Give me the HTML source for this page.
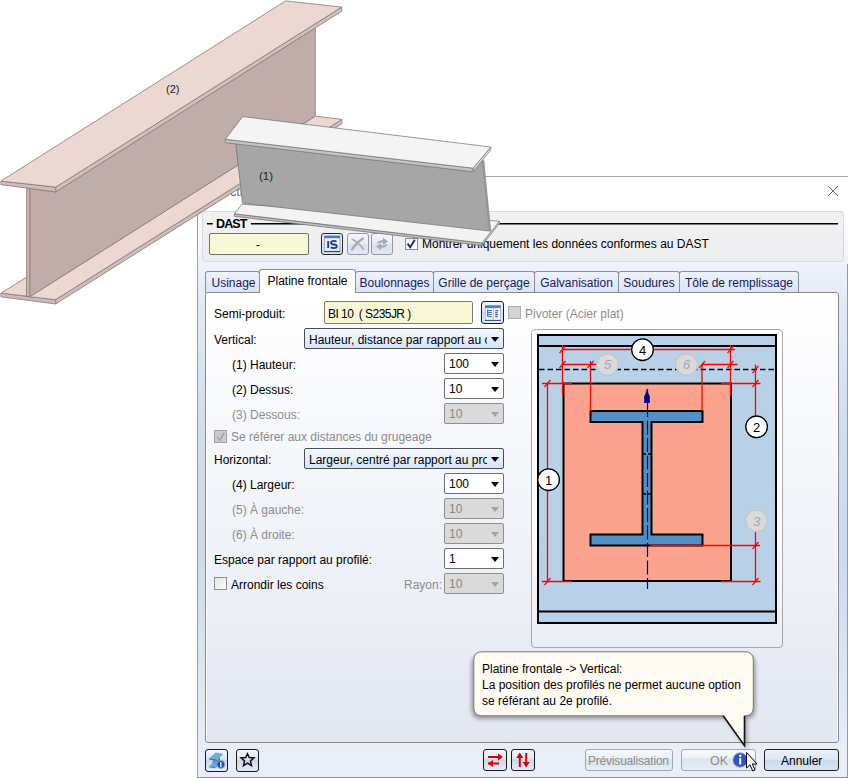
<!DOCTYPE html>
<html><head><meta charset="utf-8">
<style>
*{box-sizing:border-box;margin:0;padding:0}
html,body{width:848px;height:778px;overflow:hidden;background:#fff}
body{position:relative;font-family:"Liberation Sans",sans-serif;font-size:12px;color:#000}
.a{position:absolute}
.t{position:absolute;white-space:nowrap;line-height:14px}
.dlg{left:197px;top:176px;width:651px;height:602px;border-top:1px solid #a3a3a3;border-left:1px solid #9c9c9c;border-bottom:1px solid #8c8c8c;
 background:linear-gradient(#fff 0,#fff 36px,#eef2fb 86px,#e3e9f5 124px,#cfdff2 244px,#cbdaee 374px,#e0e8f5 524px,#e9eef8 574px)}
.grp{left:202px;top:211px;width:642px;height:51px;border:1px solid #d9dadc;border-radius:3px;background:linear-gradient(#f1f1f2,#ecedf0)}
.tab{top:271px;height:22px;border:1px solid #8e8f90;border-bottom:none;border-radius:3px 3px 0 0;background:linear-gradient(#eef2fb,#d9e3f6);color:#1b1b5a;text-align:center;line-height:22px}
.tab.act{top:269px;height:24px;background:#fff;color:#000;z-index:2;line-height:22px}
.panel{left:205px;top:292px;width:634px;height:451px;border:1px solid #8a8a8a;border-radius:3px;background:linear-gradient(#fff 0,#fcfcfe 60px,#f6f8fb 140px,#eef1f7 280px,#e5e9f2 400px,#e2e7f0 450px);box-shadow:inset 1px 1px 0 #fff,inset -1px 0 0 #fff}
.cmb{height:21px;border:1px solid #707070;border-radius:2px;background:#fff;line-height:19px;padding:1px 0 0 4px;overflow:hidden;white-space:nowrap}
.cmb:after{content:"";position:absolute;right:4px;top:8px;border-left:4px solid transparent;border-right:4px solid transparent;border-top:5px solid #000}
.cmb.dis{border-color:#8f8f8f;background:#dadada;color:#878787}
.cmb.dis:after{border-top-color:#a3a3a3;top:7.5px}
.cmb.blue{background:linear-gradient(#f5f9fe,#e8f0fb 50%,#d3e3f7);border-color:#4a4d52;padding-top:2px}
.gray{color:#8d8d8d}
.btn{height:22px;border:1px solid #8f99a6;border-radius:3px;background:linear-gradient(#f4f7fb 0,#e9eef5 45%,#d9e1ec 55%,#e3e9f1 100%)}
.chk{width:13px;height:13px;border:1px solid #8f8f8f;background:linear-gradient(135deg,#e4e4e4,#fafafa)}
</style></head><body>

<!-- dialog -->
<div class="a dlg"></div>
<div class="t" style="left:230px;top:185px;color:#5d6288;font-size:12.5px">cti</div>
<svg class="a" style="left:827px;top:185px" width="12" height="12"><path d="M1 1L11 11M11 1L1 11" stroke="#5a5a5a" stroke-width="0.9"/></svg>

<div class="a" style="left:847px;top:264px;width:1px;height:514px;background:#9a9a9a"></div>
<div class="a grp"></div>
<svg class="a" style="left:200px;top:220px" width="640" height="8"><path d="M7 3.7H12.8M51 3.7H638" stroke="#000" stroke-width="1.5"/></svg>
<div class="t" style="left:216px;top:217px;font-weight:bold;font-size:12.5px;letter-spacing:-0.9px">DAST</div>
<div class="a" style="left:209px;top:233px;width:100px;height:22px;border:1px solid #707070;border-radius:2px;background:#f9f8d5"></div>
<div class="t" style="left:256px;top:238px">-</div>

<!-- tabs -->
<div class="a tab" style="left:205px;width:55px;padding-left:2px">Usinage</div>
<div class="a tab act" style="left:259px;width:97px">Platine frontale</div>
<div class="a tab" style="left:355px;width:79px">Boulonnages</div>
<div class="a tab" style="left:433px;width:102px">Grille de perçage</div>
<div class="a tab" style="left:534px;width:85px">Galvanisation</div>
<div class="a tab" style="left:618px;width:62px">Soudures</div>
<div class="a tab" style="left:679px;width:120px">Tôle de remplissage</div>
<div class="a panel"></div>
<div class="a" style="left:260px;top:291px;width:95px;height:3px;background:#fff;z-index:3"></div>


<!-- DAST buttons -->
<div class="a" style="left:321px;top:233px;width:22px;height:22px;border:1px solid #262626;border-radius:3px;background:linear-gradient(#f0f5fb,#d6e2f0)"></div>
<svg class="a" style="left:323px;top:235px" width="18" height="18" viewBox="0 0 18 18">
<defs><linearGradient id="isg" x1="0" y1="0" x2="0" y2="1"><stop offset="0" stop-color="#fafcff"/><stop offset="1" stop-color="#dde6f3"/></linearGradient></defs>
<rect x="1.2" y="1" width="15.8" height="15.8" fill="url(#isg)" stroke="#7d8fb0" stroke-width="0.8"/>
<rect x="1.2" y="0.8" width="15.8" height="2.4" fill="#4a78d0"/>
<rect x="1.2" y="16" width="15.8" height="1" fill="#2a4680"/>
<path d="M5.2 6v7" stroke="#1c3d9e" stroke-width="1.9"/>
<path d="M13.6 6.6 Q12.8 5.9 11 5.9 Q8 5.9 8 7.7 Q8 9.2 10.8 9.5 Q13.8 9.8 13.8 11.3 Q13.8 13.1 10.8 13.1 Q8.8 13.1 7.8 12.3" fill="none" stroke="#1c3d9e" stroke-width="1.8"/>
</svg>
<div class="a btn" style="left:347px;top:233px;width:22px"></div>
<svg class="a" style="left:349px;top:235px" width="18" height="18" viewBox="0 0 18 18"><path d="M3 14.5 Q7 8 14 3.5" stroke="#a9adb3" stroke-width="2.3" fill="none" stroke-linecap="round"/><path d="M3.5 4.5 Q9 7 14.5 14" stroke="#a9adb3" stroke-width="1.8" fill="none" stroke-linecap="round"/></svg>
<div class="a btn" style="left:371px;top:233px;width:22px"></div>
<svg class="a" style="left:373px;top:235px" width="18" height="18" viewBox="0 0 18 18"><path d="M3.5 9 Q4.5 5 10 5.2 L10 2.5 L15 6.5 L10 10 L10 7.6 Q6.5 7.5 3.5 9Z" fill="#a7abb1"/><path d="M14.5 9 Q13.5 13 8 12.8 L8 15.5 L3 11.5 L8 8 L8 10.4 Q11.5 10.5 14.5 9Z" fill="#a7abb1"/></svg>
<div class="a chk" style="left:405px;top:238px;height:12px;background:linear-gradient(135deg,#ededed,#fff);border-color:#8e8f8f"></div>
<svg class="a" style="left:405px;top:238px" width="13" height="13"><path d="M2.6 5.6L5.2 9.2L9.8 1.8" stroke="#1e2a80" stroke-width="1.9" fill="none"/></svg>
<div class="t" style="left:422px;top:237px">Montrer uniquement les données conformes au DAST</div>

<!-- form -->
<div class="t" style="left:214px;top:307px">Semi-produit:</div>
<div class="a" style="left:324px;top:301px;width:149px;height:23px;border:1px solid #7c7c7c;border-radius:2px;background:#f9f8d6"></div>
<div class="t" style="left:328px;top:307px;letter-spacing:-0.55px">BI 10&nbsp; ( S235JR )</div>
<div class="a" style="left:481px;top:301px;width:23px;height:23px;border:1.5px solid #1a1a1a;border-radius:3px;background:linear-gradient(#f2f7fc 0,#dfe9f5 40%,#c8d8eb 50%,#e3ecf6 100%)"></div>
<svg class="a" style="left:484px;top:304px" width="18" height="18" viewBox="0 0 18 18">
<rect x="1" y="1.2" width="15.8" height="15.6" fill="#f6f9fd"/>
<rect x="1" y="1.2" width="15.8" height="2.9" fill="#4d7bd8"/>
<path d="M1.3 4v12.7M16.5 4v12.7" stroke="#9fb0c8" stroke-width="0.8"/>
<path d="M1 16.4h15.8" stroke="#34507e" stroke-width="1.1"/>
<path d="M9.4 4.2v12" stroke="#b9c5d6" stroke-width="1.3"/>
<path d="M3.6 5.6v7.1M3.6 6.6h4.3M3.6 8.6h4.3M3.6 10.6h4.3M3.6 12.6h4.3" stroke="#3a6ee4" stroke-width="1"/>
<path d="M11.2 6.7h3M11.2 8.7h2.4M11.2 10.7h3M11.2 12.7h2.4" stroke="#1b2f6e" stroke-width="1.1"/>
</svg>
<div class="a" style="left:508px;top:306px;width:13px;height:13px;border:1px solid #b0b0b0;background:#d4d4d4"></div>
<div class="t gray" style="left:525px;top:307px">Pivoter (Acier plat)</div>

<div class="t" style="left:214px;top:333px">Vertical:</div>
<div class="a cmb blue" style="left:304px;top:328px;width:200px"><span style="display:block;width:178px;overflow:hidden">Hauteur, distance par rapport au c</span></div>
<div class="t" style="left:232px;top:358px">(1) Hauteur:</div>
<div class="a cmb" style="left:444px;top:353px;width:60px">100</div>
<div class="t" style="left:232px;top:383px">(2) Dessus:</div>
<div class="a cmb" style="left:444px;top:378px;width:60px">10</div>
<div class="t gray" style="left:232px;top:408px">(3) Dessous:</div>
<div class="a cmb dis" style="left:444px;top:403px;width:60px">10</div>
<div class="a chk" style="left:214px;top:430px;border-color:#a3a3a3;background:#cbcbcb"></div>
<svg class="a" style="left:214px;top:430px" width="13" height="13"><path d="M3.2 6.8L5.8 10.2L10.2 2.8" stroke="#a6a6a6" stroke-width="1.7" fill="none"/></svg>
<div class="t gray" style="left:231px;top:430px">Se référer aux distances du grugeage</div>

<div class="t" style="left:214px;top:453px">Horizontal:</div>
<div class="a cmb blue" style="left:304px;top:448px;width:200px"><span style="display:block;width:178px;overflow:hidden">Largeur, centré par rapport au pro</span></div>
<div class="t" style="left:232px;top:478px">(4) Largeur:</div>
<div class="a cmb" style="left:444px;top:473px;width:60px">100</div>
<div class="t gray" style="left:232px;top:503px">(5) À gauche:</div>
<div class="a cmb dis" style="left:444px;top:498px;width:60px">10</div>
<div class="t gray" style="left:232px;top:528px">(6) À droite:</div>
<div class="a cmb dis" style="left:444px;top:523px;width:60px">10</div>
<div class="t" style="left:214px;top:553px">Espace par rapport au profilé:</div>
<div class="a cmb" style="left:444px;top:548px;width:60px">1</div>
<div class="a chk" style="left:214px;top:577px"></div>
<div class="t" style="left:231px;top:578px">Arrondir les coins</div>
<div class="t gray" style="left:404px;top:578px">Rayon:</div>
<div class="a cmb dis" style="left:444px;top:573px;width:60px">10</div>

<!-- diagram frame -->
<div class="a" style="left:531px;top:329px;width:252px;height:319px;border:1px solid #a8a8a8;border-radius:4px;background:linear-gradient(#fff,#fbfcfd 200px,#e9edf4)"></div>


<svg class="a" style="left:531px;top:329px" width="252" height="319" viewBox="531 329 252 319">
<rect x="538" y="335" width="238" height="288" fill="#b9d1e7" stroke="#000" stroke-width="2"/>
<line x1="538" y1="346" x2="776" y2="346" stroke="#000" stroke-width="2"/>
<line x1="538" y1="611.5" x2="776" y2="611.5" stroke="#000" stroke-width="2"/>
<line x1="539" y1="369.5" x2="775" y2="369.5" stroke="#000" stroke-width="1.3" stroke-dasharray="5.5 3"/>
<rect x="563.5" y="383.5" width="167.5" height="197.5" fill="#fca390" stroke="#000" stroke-width="2"/>
<path d="M590.5,411 H702.5 V422 H651.5 V534.5 H702.5 V545.5 H590.5 V534.5 H642.5 V422 H590.5 Z" fill="#528fc3" stroke="#000" stroke-width="2" stroke-linejoin="miter"/>
<path d="M642 454h4M648 454h4M642 494h4M648 494h4" stroke="#000" stroke-width="1.6"/>
<line x1="647.5" y1="389" x2="647.5" y2="589" stroke="#00008b" stroke-width="1.2" stroke-dasharray="14 3.5" stroke-dashoffset="-14"/>
<path d="M647 388.5 L648.6 394 L649.8 396 L649.8 403 L644.2 403 L644.2 396 L645.4 394 Z" fill="#00008b"/>
<g stroke="#ff0000" stroke-width="1.3" fill="none">
<path d="M562.5 345 V395 M730.5 345 V396 M562.5 349.5 H631.5 M653.5 349.5 H735"/>
<path d="M562.5 364.5 H596.5 M590.5 361 V411"/>
<path d="M702 364.5 H737.5 M702 364.5 V411"/>
<path d="M542 383.5 H572 M547.5 383.5 V581.5 M542 581.5 H572"/>
<path d="M721 383.5 H760.5 M755.5 364.5 V415.5"/>
<path d="M650 545.5 H760 M755.5 531.5 V581.5 M721 581.5 H760.5"/>
</g>
<g stroke="#ff0000" stroke-width="1.2">
<path d="M559.5 353 L565.5 346 M559.5 368 L565.5 361 M587.5 368 L593.5 361 M727.5 353 L733.5 346 M727.5 368 L733.5 361 M699 368 L705 361"/>
<path d="M544.5 387 L550.5 380 M544.5 585 L550.5 578 M752.5 373 L758.5 366 M752.5 387 L758.5 380 M752.5 549 L758.5 542 M752.5 585 L758.5 578"/>
</g>
<g font-family="Liberation Sans" font-size="13" text-anchor="middle">
<circle cx="642.5" cy="349.7" r="10.8" fill="#fff" stroke="#000" stroke-width="1.3"/>
<text x="642.5" y="354.5">4</text>
<circle cx="548.6" cy="479.7" r="10.8" fill="#fff" stroke="#000" stroke-width="1.3"/>
<text x="548.6" y="484.5">1</text>
<circle cx="756.6" cy="426.8" r="10.8" fill="#fff" stroke="#000" stroke-width="1.3"/>
<text x="756.6" y="431.6">2</text>
<circle cx="607.5" cy="364.6" r="10.8" fill="#dadada" stroke="#c6c6c6" stroke-width="1.2"/>
<text x="607.5" y="369.4" fill="#a9a9a9" font-style="italic">5</text>
<circle cx="686.6" cy="364.6" r="10.8" fill="#dadada" stroke="#c6c6c6" stroke-width="1.2"/>
<text x="686.6" y="369.4" fill="#a9a9a9" font-style="italic">6</text>
<circle cx="756.6" cy="520.8" r="10.8" fill="#dadada" stroke="#c6c6c6" stroke-width="1.2"/>
<text x="756.6" y="525.6" fill="#a9a9a9" font-style="italic">3</text>
</g>
</svg>


<!-- bottom left buttons -->
<div class="a" style="left:205px;top:749px;width:23px;height:23px;border:1.5px solid #1a1a1a;border-radius:3px;background:linear-gradient(#f2f7fc 0,#dfe9f5 40%,#c8d8eb 50%,#e3ecf6 100%)"></div>
<svg class="a" style="left:204px;top:748px" width="26" height="24" viewBox="0 0 26 24">
<polygon points="8.5,12 13.5,12 16,9.5 16,15.5 12.5,19.3 8.3,19.3" fill="#5d97cc"/>
<polygon points="13.5,12 16,9.5 16,15.5 12.5,19.3" fill="#4a80b4"/>
<polygon points="5,18.6 8.8,15 15.2,16 11.5,19.6" fill="#6aa7da"/>
<polygon points="5,18.6 11.5,19.6 11.5,20.3 5,19.3" fill="#34628f"/>
<polygon points="5,10.5 11.7,4.6 18.8,5.7 12.5,11.6" fill="#6eaadb"/>
<polygon points="5,10.5 12.5,11.6 12.5,12.5 5,11.4" fill="#34628f"/>
<polygon points="12.5,11.6 18.8,5.7 18.8,6.5 12.5,12.5" fill="#4d84b8"/>
<circle cx="16.8" cy="16.4" r="3.9" fill="#2248c2" stroke="#9ea3ad" stroke-width="0.9"/>
<rect x="16.2" y="14" width="1.3" height="5" fill="#fff"/>
</svg>
<div class="a" style="left:236px;top:749px;width:23px;height:23px;border:1.5px solid #1a1a1a;border-radius:3px;background:linear-gradient(#f2f7fc 0,#dfe9f5 40%,#c8d8eb 50%,#e3ecf6 100%)"></div>
<svg class="a" style="left:238px;top:751px" width="19" height="19" viewBox="0 0 19 19"><path d="M9.5 2.7 L11.3 6.5 L16 6.9 L12.5 10 L13.5 14.6 L9.5 12.2 L5.5 14.6 L6.5 10 L3 6.9 L7.7 6.5 Z" fill="none" stroke="#111" stroke-width="1.5" stroke-linejoin="miter"/></svg>
<!-- swap buttons -->
<div class="a" style="left:483px;top:749px;width:24px;height:22px;border:1.5px solid #1a1a1a;border-radius:3px;background:linear-gradient(#f2f7fc 0,#dfe9f5 40%,#c8d8eb 50%,#e3ecf6 100%)"></div>
<svg class="a" style="left:485px;top:751px" width="20" height="18" viewBox="0 0 20 18"><path d="M3 6h11M3 12.4h11" stroke="#e00000" stroke-width="2"/><path d="M13 2.5 L18 6 L13 9.5Z M8 8.9 L3 12.4 L8 15.9Z" fill="#e00000"/></svg>
<div class="a" style="left:511px;top:749px;width:24px;height:22px;border:1.5px solid #1a1a1a;border-radius:3px;background:linear-gradient(#f2f7fc 0,#dfe9f5 40%,#c8d8eb 50%,#e3ecf6 100%)"></div>
<svg class="a" style="left:513px;top:751px" width="20" height="18" viewBox="0 0 20 18"><path d="M6.8 5v11M13.2 2v11" stroke="#e00000" stroke-width="2"/><path d="M3.3 7 L6.8 1.5 L10.3 7Z M9.7 11 L13.2 16.5 L16.7 11Z" fill="#e00000"/></svg>

<!-- tooltip -->
<svg class="a" style="left:466px;top:645px;z-index:30" width="300" height="110" viewBox="466 645 300 110">
<defs><filter id="sh" x="-10%" y="-10%" width="120%" height="140%"><feGaussianBlur stdDeviation="2.2"/></filter></defs>
<path d="M481.5 654.5 H745.5 Q755.5 654.5 755.5 664.5 V709 Q755.5 719 745.5 719 H747 V749 L726 719 H481.5 Q471.5 719 471.5 709 V664.5 Q471.5 654.5 481.5 654.5Z" fill="#000" opacity="0.35" filter="url(#sh)"/>
<path d="M482 651.8 H745 Q753.3 651.8 753.3 660 V707.5 Q753.3 715.8 745 715.8 H744.5 V745.6 L723.2 715.8 H482 Q473.8 715.8 473.8 707.5 V660 Q473.8 651.8 482 651.8Z" fill="#fffbf3" stroke="#7a7a7a" stroke-width="1"/>
<path d="M723.2 715.8 L744.5 745.6 V716" fill="none" stroke="#111" stroke-width="1.6"/>
</svg>
<div class="t" style="left:482px;top:661px;z-index:31;line-height:16.2px">Platine frontale -&gt; Vertical:<br>La position des profilés ne permet aucune option<br>se référant au 2e profilé.</div>
<!-- info icon + cursor -->
<svg class="a" style="left:730px;top:750px;z-index:32" width="30" height="25" viewBox="730 750 30 25">
<circle cx="740.2" cy="760" r="7.2" fill="#2d55c2" stroke="#8f9ab0" stroke-width="0.8"/>
<circle cx="740.2" cy="755.8" r="1.2" fill="#fff"/><rect x="739.2" y="758" width="2" height="6.5" fill="#fff"/>
<path d="M746.5 752.5 V768 L750 764.8 L752.8 771 L755 770 L752.3 764 L757 764 Z" fill="#fff" stroke="#000" stroke-width="1" stroke-linejoin="round"/>
</svg>

<!-- bottom buttons -->
<div class="a" style="left:585px;top:749px;width:88px;height:22px;border:1px solid #a0a8b4;border-radius:3px;background:linear-gradient(#f6f9fc 0,#eef3f8 35%,#dbe4ef 48%,#e6edf5 100%)"></div>
<div class="t gray" style="left:588px;top:754px;letter-spacing:-0.2px">Prévisualisation</div>
<div class="a" style="left:681px;top:749px;width:75px;height:22px;border:1px solid #a0a8b4;border-radius:3px;background:linear-gradient(#f6f9fc 0,#eef3f8 35%,#dbe4ef 48%,#e6edf5 100%)"></div>
<div class="t gray" style="left:710px;top:754px;font-size:12.5px">OK</div>
<div class="a" style="left:764px;top:749px;width:75px;height:22px;border:1px solid #1f1f1f;border-radius:3px;background:linear-gradient(#e9f1fb 0,#dfe8f5 45%,#c9d8ec 55%,#dbe6f4 100%)"></div>
<div class="t" style="left:781px;top:754px">Annuler</div>


<svg class="a" style="left:0;top:0;z-index:20" width="848" height="778" viewBox="0 0 848 778">
<g stroke="#8a7a77" stroke-width="0.8" stroke-linejoin="round">
<!-- beam 2 bottom flange -->
<polygon points="55.7,299.6 341.9,119.4 341.9,123.8 55.7,304" fill="#cfbcb8"/>
<polygon points="0.9,293.2 55.7,299.6 55.7,304 0.9,296.8" fill="#cdbab6"/>
<polygon points="29.7,296.8 55.7,299.6 341.9,119.4 315.3,116.1" fill="#ebd8d3"/>
<polygon points="0.9,293.2 26.6,277.1 26.6,296.1" fill="#ebd8d3"/>
<!-- web -->
<polygon points="29.7,188.5 55.7,191.9 315.3,28.0 315.3,116.1 29.7,296.8" fill="#bfadaa"/>
<polygon points="26.6,188.1 29.7,188.5 29.7,296.8 26.6,296.4" fill="#c9b7b3"/>
<!-- top flange -->
<polygon points="55.7,187.1 341.7,7.1 341.7,11.3 55.7,191.9" fill="#d2bfbb"/>
<polygon points="0.9,181.1 55.7,187.1 55.7,191.9 0.9,184.7" fill="#cfbcb8"/>
<polygon points="0.9,181.1 55.7,187.1 341.7,7.1 285.6,0.9" fill="#ebd8d3"/>
</g>
<text x="166" y="93" font-family="Liberation Sans" font-size="11" fill="#222">(2)</text>
<g stroke="#6e6e6e" stroke-width="0.7" stroke-linejoin="round">
<!-- beam 1 bottom flange -->
<polygon points="482,243 499.4,221.2 499.4,223.6 482,245.5" fill="#dcdcdc"/>
<polygon points="234.4,213.8 482,243 482,245.5 234.4,216.4" fill="#bdbdbd"/>
<polygon points="242,204.2 499.4,221.2 482,243 234.4,213.8" fill="#f3f3f3"/>
<!-- web -->
<polygon points="235.6,142.5 482.3,159.5 490.5,231.1 242.5,203.2" fill="#a6a6a6"/>
<polygon points="481.8,161 484.2,160 491,231 488.8,231" fill="#959595" stroke="none"/>
<!-- top flange -->
<polygon points="473.1,168.2 490.8,147 490.8,149.9 473.1,171.8" fill="#dedede"/>
<polygon points="225.3,139.3 473.1,168.2 473.1,171.8 225.3,142.7" fill="#c4c4c4"/>
<polygon points="242.7,116.6 490.8,147 473.1,168.2 225.3,139.3" fill="#f4f4f4"/>
</g>
<text x="259" y="180" font-family="Liberation Sans" font-size="11.5" fill="#222">(1)</text>
</svg>

</body></html>
